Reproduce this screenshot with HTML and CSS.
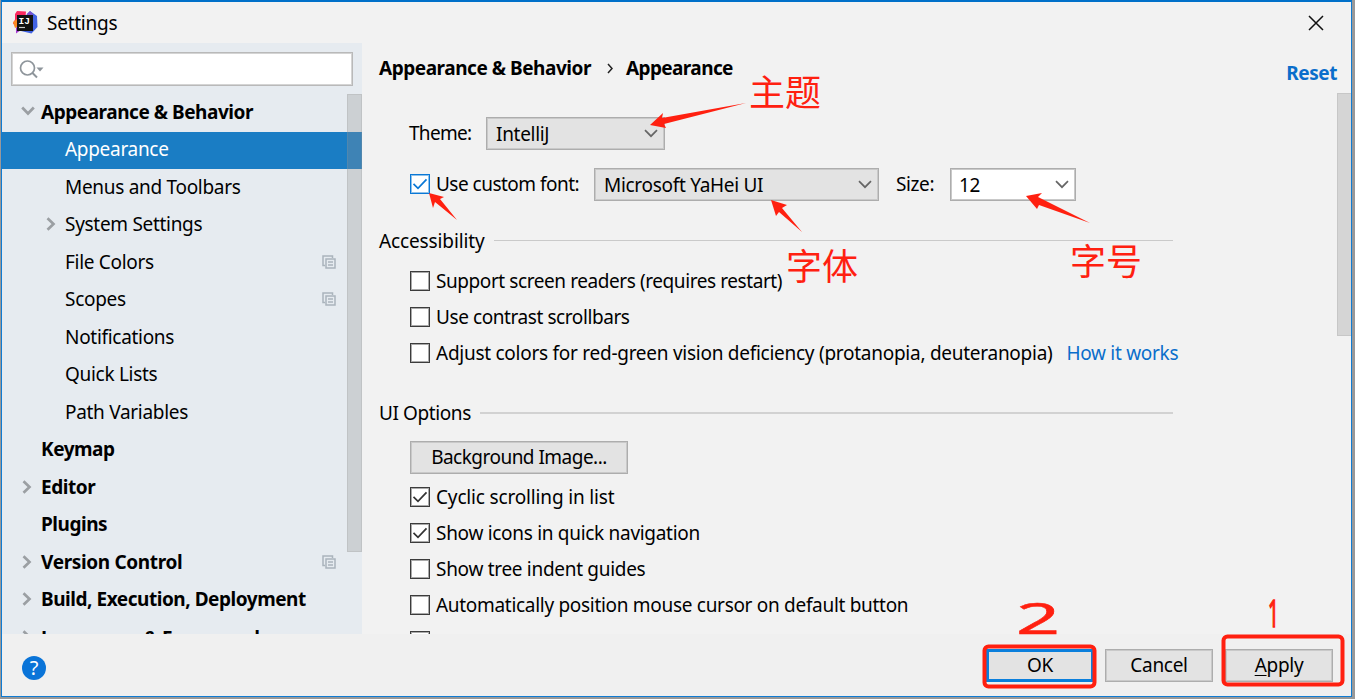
FILE: index.html
```html
<!DOCTYPE html>
<html lang="en">
<head>
<meta charset="utf-8">
<title>Settings</title>
<link rel="stylesheet" href="styles.css">
</head>
<body>
<svg width="0" height="0" class="defs">
  <symbol id="down" viewBox="0 0 14 9"><path d="M1 1.2 7 7.2 13 1.2" fill="none" stroke="#666" stroke-width="1.7"/></symbol>
  <symbol id="right" viewBox="0 0 10 14"><path d="M1.5 1.2 7.5 7 1.5 12.8" fill="none" stroke="#9b9fa3" stroke-width="2.7"/></symbol>
  <symbol id="copy" viewBox="0 0 14 14"><path d="M3 10.5H1V1h9.5v2M4 4h9v9H4zM6 7h5M6 10h5" fill="none" stroke="#aab4bc" stroke-width="1.5"/></symbol>
  <symbol id="tick" viewBox="0 0 16 16"><path d="M1.5 7.8 6 12.3 14.5 3.3" fill="none" stroke="currentColor" stroke-width="1.7"/></symbol>
</svg>
<div class="window">
  <header class="titlebar">
    <svg class="logo" width="25" height="25" viewBox="0 0 25 25">
      <path d="M2 4 4 1l9 .5-1 10-9 5-3-3 2-4z" fill="#fb2960"/>
      <path d="M0 12 4 9v8l-2 1z" fill="#fc8a22"/>
      <path d="m3 17 5 3-5 3.5z" fill="#a63ad2"/>
      <path d="m14 4 3-3 7 5 .5 11-6 6.500L8 21z" fill="#4263e3"/>
      <path d="m14 4 3-3 3 3v3h-7z" fill="#7850cc"/>
      <rect x="4" y="5" width="16" height="16" fill="#111"/>
      <text x="5.500" y="13.500" class="logo-text">IJ</text>
      <path d="M6 17.500h6" stroke="#ccc" stroke-width="1.200"/>
    </svg>
    <span class="title">Settings</span>
    <svg class="close" width="16" height="16" viewBox="0 0 16 16"><path d="m1 1 14 14M15 1 1 15" stroke="#111" stroke-width="1.500"/></svg>
  </header>
  <div class="body">
    <aside class="sidebar">
      <div class="search">
        <svg width="26" height="20" viewBox="0 0 26 20"><circle cx="8.500" cy="8" r="7" fill="none" stroke="#8e959b" stroke-width="1.700"/><path d="m13 12.500 5 5" stroke="#8e959b" stroke-width="2"/><path d="M17.500 7.500h7L21 11.500z" fill="#8e959b"/></svg>
      </div>
      <div class="tree">
        <div class="row top"><svg class="open" width="14" height="10" viewBox="0 0 14 10"><path d="m1.200 1.500 5.800 6 5.800-6" fill="none" stroke="#9b9fa3" stroke-width="2.700"/></svg><span>Appearance &amp; Behavior</span></div>
        <div class="row selected"><span>Appearance</span></div>
        <div class="row"><span>Menus and Toolbars</span></div>
        <div class="row"><svg class="arrow"><use href="#right"/></svg><span>System Settings</span></div>
        <div class="row"><span>File Colors</span><svg class="copy"><use href="#copy"/></svg></div>
        <div class="row"><span>Scopes</span><svg class="copy"><use href="#copy"/></svg></div>
        <div class="row"><span>Notifications</span></div>
        <div class="row"><span>Quick Lists</span></div>
        <div class="row"><span>Path Variables</span></div>
        <div class="row top"><span>Keymap</span></div>
        <div class="row top"><svg class="arrow"><use href="#right"/></svg><span>Editor</span></div>
        <div class="row top"><span>Plugins</span></div>
        <div class="row top"><svg class="arrow"><use href="#right"/></svg><span class="version">Version Control</span><svg class="copy"><use href="#copy"/></svg></div>
        <div class="row top"><svg class="arrow"><use href="#right"/></svg><span>Build, Execution, Deployment</span></div>
        <div class="row top"><svg class="arrow"><use href="#right"/></svg><span class="languages">Languages &amp; Frameworks</span></div>
        <div class="scroll side-scroll"></div>
      </div>
    </aside>
    <main class="main">
      <div class="crumbs"><span>Appearance &amp; Behavior</span><svg width="7" height="11" viewBox="0 0 7 11"><path d="m1 1 4 4.500-4 4.500" fill="none" stroke="#222" stroke-width="1.500"/></svg><span class="leaf">Appearance</span><a class="reset">Reset</a></div>
      <div class="line theme"><span class="label-theme">Theme:</span><div class="select w-theme"><span>IntelliJ</span><svg class="chev"><use href="#down"/></svg></div></div>
      <div class="line font"><i class="box blue"><svg><use href="#tick"/></svg></i><span class="label-font">Use custom font:</span><div class="select w-font"><span>Microsoft YaHei UI</span><svg class="chev"><use href="#down"/></svg></div><span class="label-size">Size:</span><div class="select w-size"><span>12</span><svg class="chev"><use href="#down"/></svg></div></div>
      <div class="section access"><span>Accessibility</span><hr></div>
      <div class="checks">
        <div class="check"><i class="box"></i><span class="tight">Support screen readers (requires restart)</span></div>
        <div class="check"><i class="box"></i><span class="tight">Use contrast scrollbars</span></div>
        <div class="check"><i class="box"></i><span class="long">Adjust colors for red-green vision deficiency (protanopia, deuteranopia)</span><a class="how">How it works</a></div>
      </div>
      <div class="section options"><span>UI Options</span><hr></div>
      <div class="button bg-image">Background Image...</div>
      <div class="checks second">
        <div class="check"><i class="box"><svg><use href="#tick"/></svg></i><span class="loose">Cyclic scrolling in list</span></div>
        <div class="check"><i class="box"><svg><use href="#tick"/></svg></i><span>Show icons in quick navigation</span></div>
        <div class="check"><i class="box"></i><span>Show tree indent guides</span></div>
        <div class="check"><i class="box"></i><span>Automatically position mouse cursor on default button</span></div>
        <div class="check"><i class="box"></i></div>
      </div>
      <div class="scroll main-scroll"></div>
    </main>
  </div>
  <footer class="footer">
    <div class="help">?</div>
    <div class="button ok">OK</div>
    <div class="button cancel">Cancel</div>
    <div class="button apply"><u>A</u>pply</div>
  </footer>
</div>
<div class="notes">
  <svg width="1355" height="699" viewBox="0 0 1355 699" fill="#ff2010">
    <path d="m650 125 13-12-1 5 84-15-82 21 2 4z"/>
    <path d="m429 193 15 4-4 2 17 21-22-18-2 6z"/>
    <path d="m771 200 16 5-5 3 20 24-23-20-3 4z"/>
    <path d="m1026 196 16-3-4 4 52 26-51-18-2 4z"/>
    <g fill="none" stroke="#ff2010" stroke-width="4"><rect x="984.500" y="646.500" width="110" height="40" rx="4"/><rect x="1223.500" y="636.500" width="119" height="48" rx="4"/></g>
  </svg>
  <span class="note n-theme">主题</span>
  <span class="note n-font">字体</span>
  <span class="note n-size">字号</span>
  <span class="step two">2</span>
  <span class="step one">1</span>
</div>
</body>
</html>
```
FILE: styles.css
```css
* { box-sizing: border-box; }
body {
  margin: 0;
  width: 1355px;
  height: 699px;
  overflow: hidden;
  padding: 0 3px 2px 1px;
  background: #999;
  font: 19px/24px "Noto Sans", "Noto Sans CJK SC", sans-serif;
  letter-spacing: -0.3px;
  color: #000;
}
.defs { position: absolute; }
svg { display: block; flex: none; }
span, a { white-space: nowrap; }
.window {
  height: 697px;
  display: flex;
  flex-direction: column;
  border: 1px solid #0f7bd3;
  border-top: 2px solid #0070c9;
  background: #f2f2f2;
}
.titlebar { height: 41px; flex: none; display: flex; align-items: center; padding: 0 27px 0 11px; }
.title { margin-left: 9px; letter-spacing: -0.25px; }
.logo-text { font: bold 9.5px "Liberation Mono", monospace; fill: #fff; letter-spacing: 0; }
.close { margin-left: auto; }
.body { height: 591px; flex: none; display: flex; overflow: hidden; }
.sidebar { width: 360px; background: #e6ebf0; padding-top: 9px; }
.search { width: 342px; height: 34px; margin-left: 9px; padding: 7px 7px; background: #fff; border: 1px solid #b9b9b9; box-shadow: inset 0 0 0 1px #d4d4d4; }
.tree { position: relative; margin-top: 8px; }
.row { height: 37.500px; padding: 0 22px 0 63px; display: flex; align-items: center; }
.row span { margin-top: -2px; }
.row.top { padding-left: 39px; font-weight: 700; letter-spacing: -0.46px; }
.row .version { letter-spacing: -0.34px; }
.row .languages { letter-spacing: -0.5px; margin-top: 1px; }
.selected { background: #1a7dc4; color: #fff; }
.open { margin: -4px 6px 0 -20px; }
.arrow { width: 10px; height: 14px; margin: -2px 9px 0 -19px; }
.copy { width: 14px; height: 14px; margin: -2px 4px 0 auto; }
.scroll { position: absolute; background: rgba(145, 145, 145, .3); border: 1px solid rgba(150, 150, 150, .22); }
.side-scroll { right: 0; top: 0; width: 15px; height: 458px; }
.main { width: 989px; position: relative; padding-left: 17px; }
.crumbs { height: 50px; display: flex; align-items: center; font-weight: 700; letter-spacing: -0.46px; padding-right: 14px; }
.crumbs svg { margin: 0 12px 0 16px; }
.leaf { letter-spacing: -0.6px; }
.reset { margin: 10px 0 0 auto; color: #0a6ecb; }
.line { height: 33px; display: flex; align-items: center; padding-left: 31px; }
.theme { margin-top: 24px; padding-left: 30px; }
.font { margin-top: 18px; }
.line > span { margin-top: -1px; }
.font .box { margin-top: -2px; }
.label-theme { width: 77px; letter-spacing: -0.7px; }
.label-font { width: 158px; letter-spacing: -0.52px; }
.label-size { width: 54px; margin-left: 17px; letter-spacing: -0.4px; }
.select { height: 33px; display: flex; align-items: center; justify-content: space-between; padding: 0 6px 0 9px; background: #e3e3e3; border: 1px solid #adadad; box-shadow: inset 0 0 0 1px #c9c9c9; }
.w-theme { width: 179px; }
.w-font { width: 285px; }
.w-size { width: 126px; background: #fff; padding-left: 8px; }
.chev { width: 14px; height: 9px; }
.box { width: 20px; height: 20px; margin-right: 6px; flex: none; display: block; background: #fff; border: 1px solid #3c3c3c; box-shadow: inset 0 0 0 1px #aaa; color: #333; }
.box svg { width: 16px; height: 16px; margin: 1px; }
.box.blue { border-color: #0a78d6; color: #0a78d6; box-shadow: inset 0 0 0 1px #8fc1ea; }
.section { height: 30px; display: flex; align-items: center; padding-right: 178px; }
.section hr { flex: 1; height: 1px; border: 0; background: #cacaca; margin: 0 0 1px 9px; }
.access { margin-top: 25px; letter-spacing: -0.12px; }
.options { margin-top: 27px; letter-spacing: -0.4px; }
.options hr { height: 2px; margin-bottom: 0; background: #d2d2d2; }
.checks { padding: 7px 0 0 31px; }
.second { padding-top: 5px; }
.check { height: 36px; display: flex; align-items: center; }
.tight { letter-spacing: -0.42px; }
.long { letter-spacing: -0.265px; }
.loose { letter-spacing: -0.16px; }
.how { margin-left: 14px; color: #0a6ecb; }
.button { height: 33px; display: flex; align-items: center; justify-content: center; padding-bottom: 1px; background: #e3e3e3; border: 1px solid #adadad; box-shadow: inset 0 0 0 1px #c9c9c9; }
.bg-image { width: 218px; margin: 13px 0 0 31px; letter-spacing: -0.52px; }
.main-scroll { right: -1px; top: 50px; width: 15px; height: 243px; }
.footer { flex: 1; display: flex; padding: 15px 18px 0 20px; background: #f0f0f0; }
.help { width: 24px; height: 24px; margin: 7px auto 0 0; border-radius: 50%; background: #0a74d8; color: #fff; text-align: center; font-size: 20px; }
.ok { width: 108px; border: 2px solid #0a7fdc; box-shadow: inset 0 0 0 1px #0a7fdc; }
.cancel { width: 108px; margin-left: 11px; }
.apply { width: 108px; margin-left: 12px; }
.apply u { text-underline-offset: 3px; }
.notes { position: absolute; left: 0; top: 0; color: #ff2010; }
.note { position: absolute; font: 36px/40px "Noto Sans CJK SC", sans-serif; letter-spacing: 0; }
.n-theme { left: 749px; top: 70px; }
.n-font { left: 786px; top: 244px; }
.n-size { left: 1070px; top: 239px; }
.step { position: absolute; font: 44px/44px "Noto Sans", sans-serif; letter-spacing: 0; transform-origin: 0 0; }
.two { left: 1016px; top: 595px; transform: scaleX(1.750); -webkit-text-stroke: .5px #ff2010; }
.one { left: 1268px; top: 593px; font-size: 38px; line-height: 38px; transform: scaleX(.5); -webkit-text-stroke: 1.500px #ff2010; }
```
